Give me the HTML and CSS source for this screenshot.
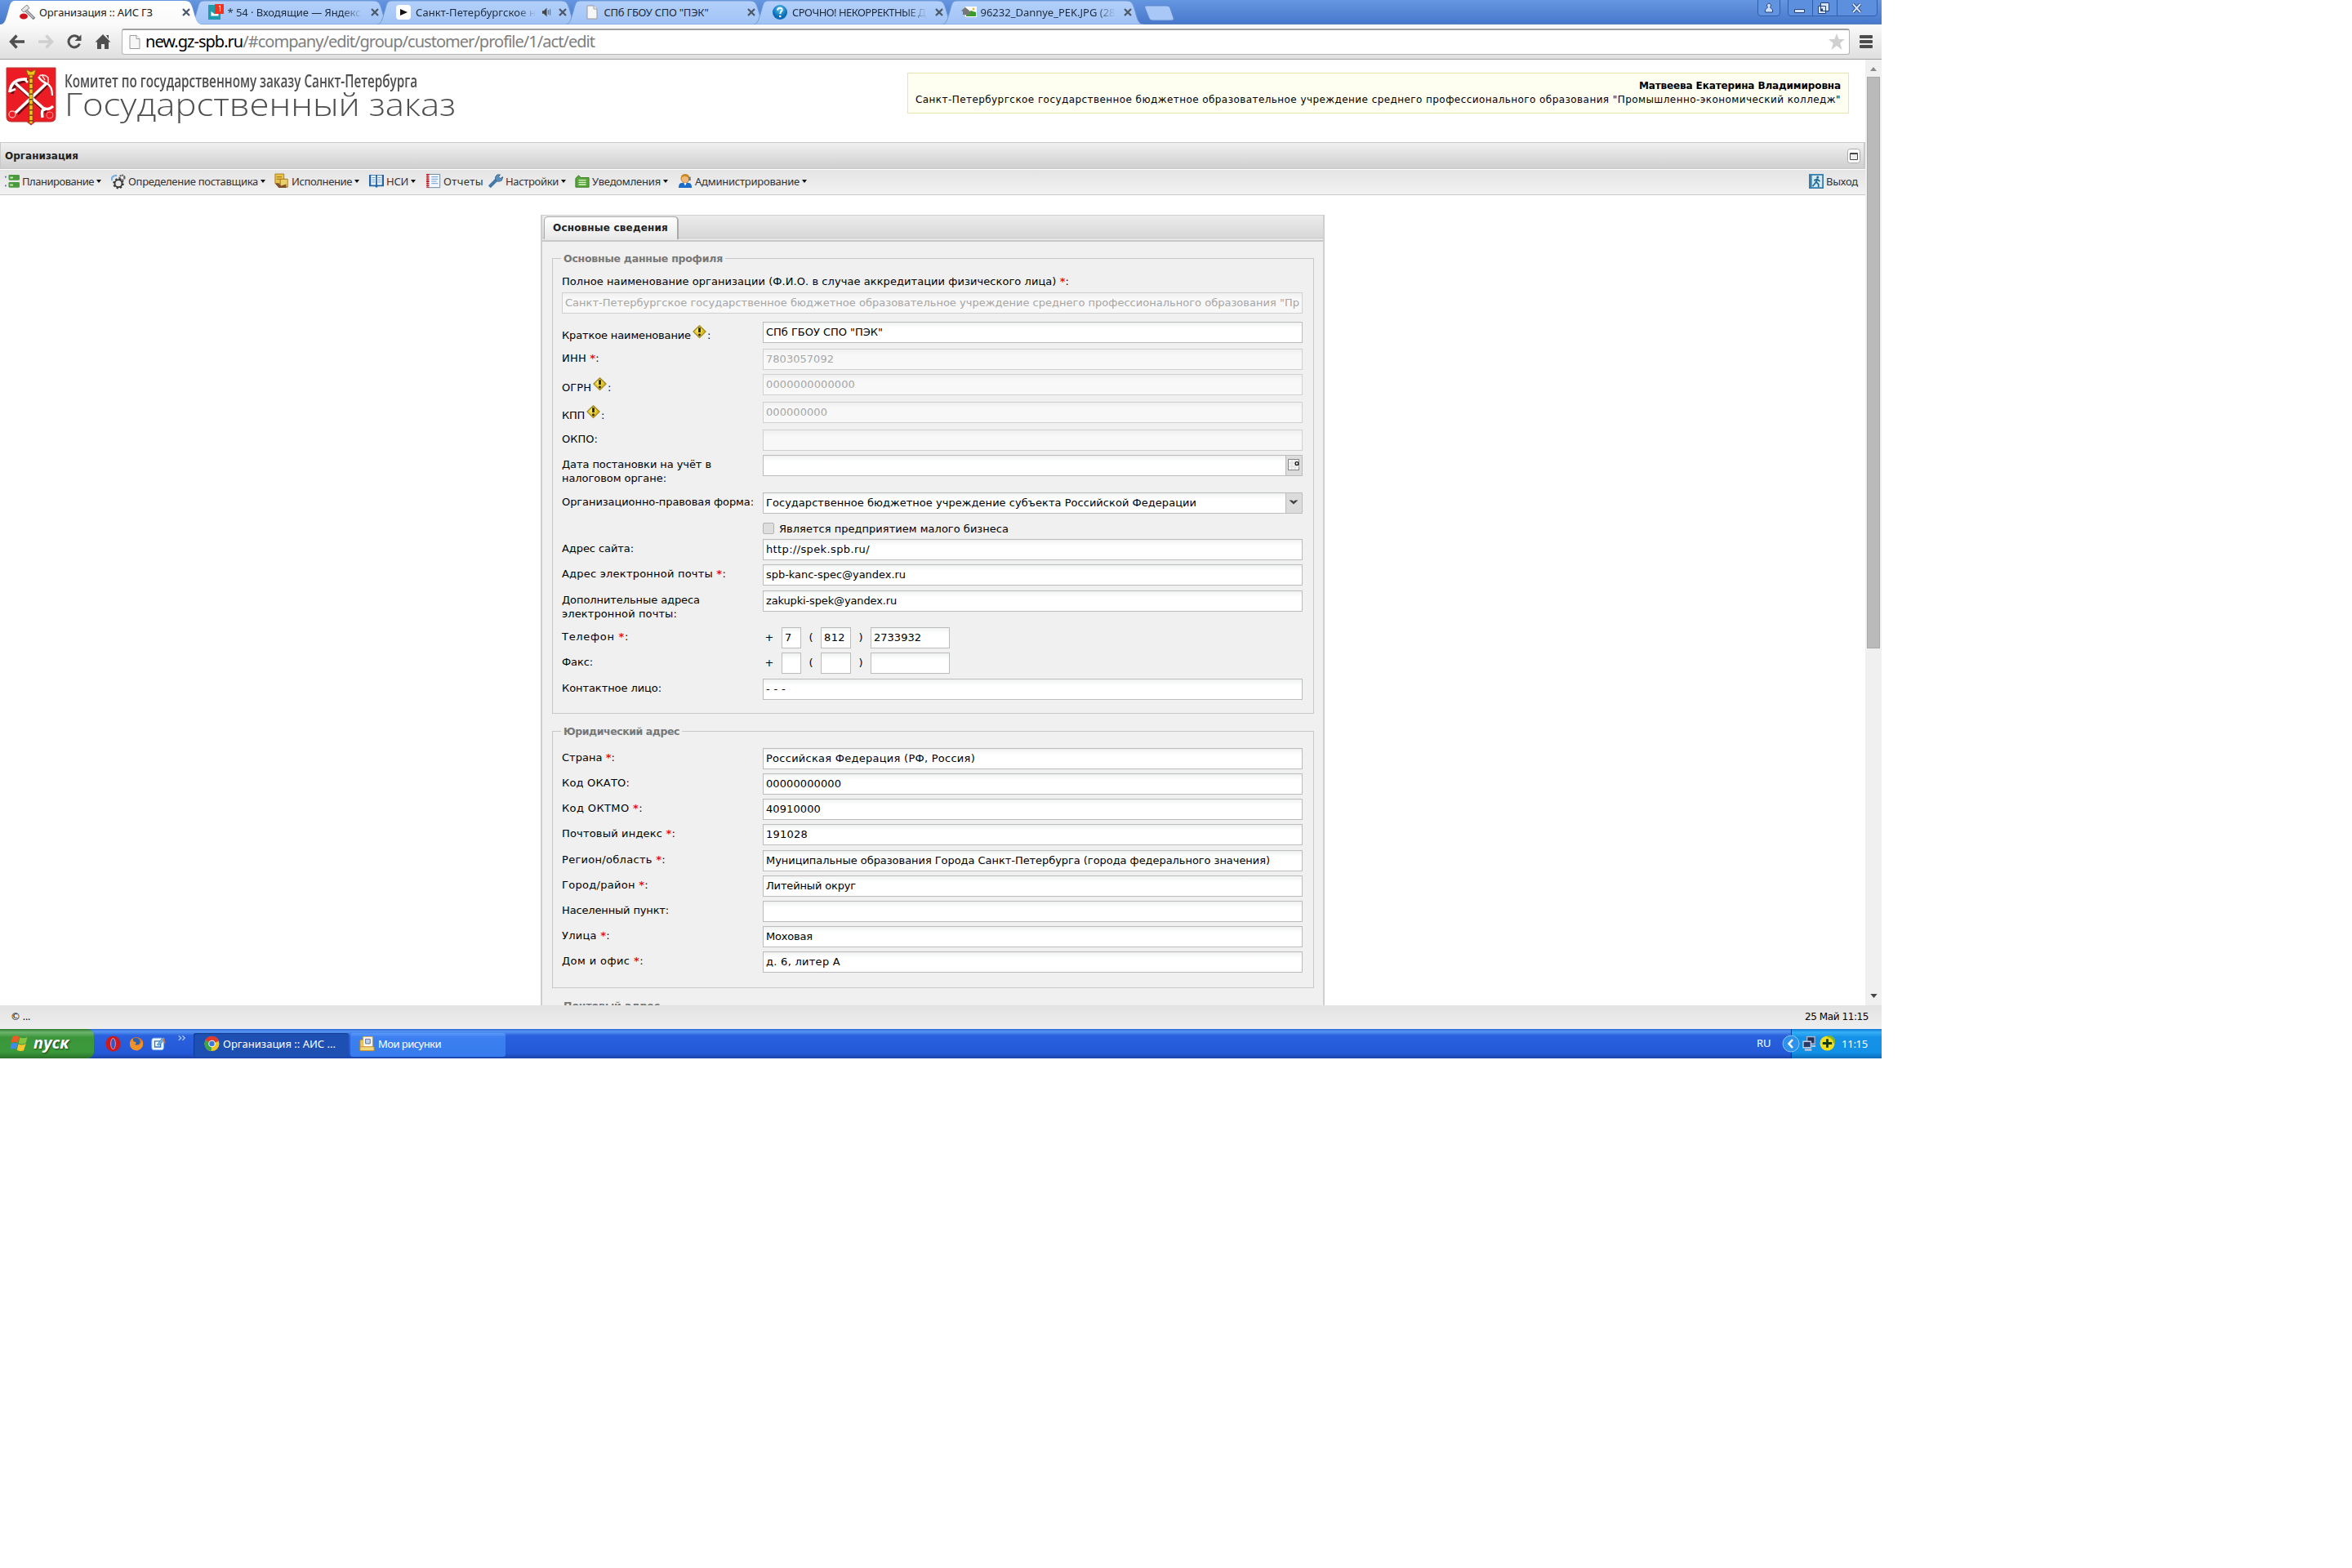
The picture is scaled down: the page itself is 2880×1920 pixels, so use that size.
FILE: index.html
```html
<!DOCTYPE html>
<html lang="ru">
<head>
<meta charset="utf-8">
<title>Организация :: АИС ГЗ</title>
<link rel="stylesheet" href="styles.css">
</head>
<body>
<svg width="0" height="0" class="defs">
  <defs>
    <linearGradient id="gt" x1="0" y1="0" x2="0" y2="1"><stop offset="0" stop-color="#b4d0fb"/><stop offset="1" stop-color="#a0c3f5"/></linearGradient>
    <linearGradient id="ga" x1="0" y1="0" x2="0" y2="1"><stop offset="0" stop-color="#fff"/><stop offset="1" stop-color="#fafafa"/></linearGradient>
    <radialGradient id="gy" cx=".4" cy=".35"><stop offset="0" stop-color="#fff27a"/><stop offset="1" stop-color="#d9b416"/></radialGradient>
    <radialGradient id="gb" cx=".5" cy=".3"><stop offset="0" stop-color="#5cc8f4"/><stop offset="1" stop-color="#0a6cb4"/></radialGradient>
    <symbol id="tab" viewBox="0 0 246 30" preserveAspectRatio="none"><path d="M0 30C5 29 6 24 9 14C12 3 12 1 19 1H225C232 1 233 4 236 14C239 25 240 29 246 30Z"/></symbol>
    <symbol id="x" viewBox="0 0 10 10"><path d="M1 1L9 9M9 1L1 9" stroke="#4c5868" stroke-width="2.3"/></symbol>
    <symbol id="warn" viewBox="0 0 18 18"><path d="M9 .8L17 8.5L9 16.500L1 8.500Z" fill="url(#gy)" stroke="#9c8420" stroke-width="1.200" stroke-linejoin="round"/><path d="M9 3.500V9.500" stroke="#222" stroke-width="3"/><circle cx="9" cy="12.700" r="1.500" fill="#222"/></symbol>
    <symbol id="page" viewBox="0 0 14 18"><path d="M1 1H9L13 5V17H1Z" fill="#f6f6f6" stroke="#999"/><path d="M9 1V5H13" fill="#fff" stroke="#999"/></symbol>
  </defs>
</svg>
<div class="screen">
  <div class="tabs">
    <div class="tab on"><svg class="shape" fill="url(#ga)"><use href="#tab"/></svg>
      <svg class="ti" viewBox="0 0 20 20"><path d="M7 7L18 18" stroke="#777" stroke-width="3.500"/><path d="M8 8L17 17" stroke="#ccc" stroke-width="1.500"/><path d="M2 7L9 1L12 5L5 10Z" fill="#e4e4e4" stroke="#888"/><ellipse cx="5" cy="15" rx="5" ry="3.500" fill="#d0161c"/></svg>
      <span class="tt"><span data-w="139">Организация :: АИС ГЗ</span></span><svg class="cx"><use href="#x"/></svg></div>
    <div class="tab"><svg class="shape" fill="url(#gt)" stroke="#6f9ad6"><use href="#tab"/></svg>
      <svg class="ti" viewBox="0 0 20 20"><path d="M0 1H15V19H0Z" fill="#1d9dac"/><path d="M3 8H13V15H3ZM3 8L8 12L13 8" fill="#fff" stroke="#1d9dac"/><rect x="8" width="11" height="12" fill="#f4321e"/><path d="M13 3L14.500 2V9" stroke="#fff" fill="none"/></svg>
      <span class="tt fade"><span data-w="163">* 54 · Входящие — Яндекс</span></span><svg class="cx"><use href="#x"/></svg></div>
    <div class="tab"><svg class="shape" fill="url(#gt)" stroke="#6f9ad6"><use href="#tab"/></svg>
      <svg class="ti" viewBox="0 0 20 20"><rect x="0" y="1" width="18" height="18" rx="4" fill="#fff"/><path d="M5 6L14 10L5 14Z" fill="#111"/></svg>
      <span class="tt t3 fade"><span data-w="147">Санкт-Петербургское н</span></span><svg class="spk" viewBox="0 0 12 12"><path d="M0 4H2L6 0V12L2 8H0Z" fill="#444"/><path d="M8 3V9M10.500 2V10" stroke="#555"/></svg><svg class="cx"><use href="#x"/></svg></div>
    <div class="tab"><svg class="shape" fill="url(#gt)" stroke="#6f9ad6"><use href="#tab"/></svg>
      <svg class="ti narrow"><use href="#page"/></svg>
      <span class="tt"><span data-w="128">СПб ГБОУ СПО "ПЭК"</span></span><svg class="cx"><use href="#x"/></svg></div>
    <div class="tab"><svg class="shape" fill="url(#gt)" stroke="#6f9ad6"><use href="#tab"/></svg>
      <svg class="ti" viewBox="0 0 20 20"><ellipse cx="9" cy="10" rx="9" ry="9" fill="url(#gb)"/><path d="M6 7.500Q6.500 4.500 9.500 4.800Q12.500 5.500 11.500 8Q9.300 9.500 9.300 12" stroke="#fff" stroke-width="2" fill="none"/><circle cx="9.300" cy="15" r="1.300" fill="#fff"/></svg>
      <span class="tt fade"><span data-w="163">СРОЧНО! НЕКОРРЕКТНЫЕ Д</span></span><svg class="cx"><use href="#x"/></svg></div>
    <div class="tab"><svg class="shape" fill="url(#gt)" stroke="#6f9ad6"><use href="#tab"/></svg>
      <svg class="ti" viewBox="0 0 20 20"><rect x="5" y="3" width="14" height="13" fill="#fff"/><path d="M6 11L12 8L18 10V15H6Z" fill="#3d9b2c"/><path d="M0 8L5 4L10 8V13H2V9Z" fill="#777"/><circle cx="15" cy="6" r="1.500" fill="#e7b840"/></svg>
      <span class="tt fade"><span data-w="165">96232_Dannye_PEK.JPG (28</span></span><svg class="cx"><use href="#x"/></svg></div>
    <svg class="newtab" viewBox="0 0 40 20"><path d="M3 1H29Q32 1 33 4L37 16Q38 19 35 19H11Q8 19 7 16L2 4Q1 1 3 1Z" fill="#a9c8f7" stroke="#5c88cf"/></svg>
    <div class="win">
      <svg class="w1" viewBox="0 0 28 20"><path d="M.5 0V16Q.5 19.500 4 19.500H24Q27.500 19.500 27.500 16V0" fill="#6094e0" stroke="#2f5eaf"/><path d="M11.500 6Q14 2 16.500 6Q16.500 8 15.500 9L18.500 12V15H9.500V12L12.500 9Q11.500 8 11.500 6Z" fill="#cfe0fa" stroke="#26427c"/></svg>
      <svg class="w2" viewBox="0 0 110 20"><path d="M.5 0V16Q.5 19.500 4 19.500H106Q109.500 19.500 109.500 16V0M30.500 0V19.500M60.500 0V19.500" fill="#5c90df" stroke="#2f5eaf"/><path d="M8.500 11.500H20.500V15.500H8.500Z" fill="#d7e5fb" stroke="#26427c"/><path d="M40.500 3.500H50.500V13.500H40.500ZM37.500 7.500H46.500V16.500H37.500Z" fill="#d7e5fb" stroke="#26427c"/><path d="M41 10.500H43V13.500H41Z" fill="#26427c"/><path d="M80 5L89 15M89 5L80 15" stroke="#26427c" stroke-width="4"/><path d="M80 5L89 15M89 5L80 15" stroke="#d7e5fb" stroke-width="2"/></svg>
    </div>
  </div>

  <div class="nav">
    <svg class="n1" viewBox="0 0 20 18"><path d="M9.500 1.500L2.500 9L9.500 16.500M3 9H19" stroke="#4f4f4f" stroke-width="3.400" fill="none"/></svg>
    <svg class="n2" viewBox="0 0 20 18"><path d="M10.500 1.500L17.500 9L10.500 16.500M17 9H1" stroke="#cfcfcf" stroke-width="3.400" fill="none"/></svg>
    <svg class="n3" viewBox="0 0 20 18"><path d="M15.500 4.500A7 7 0 1 0 16.500 11.500" stroke="#4f4f4f" stroke-width="3" fill="none"/><path d="M18.500 .5V8H10.500Z" fill="#4f4f4f"/></svg>
    <svg class="n4" viewBox="0 0 20 18"><path d="M10 0L19.500 9.500H17V18H12V12H8V18H3V9.500H.5ZM14 1H17V6Z" fill="#4f4f4f"/></svg>
    <div class="omni"><svg class="pg"><use href="#page"/></svg><span class="url" data-w="550">new.gz-spb.ru<i>/#company/edit/group/customer/profile/1/act/edit</i></span>
      <svg class="star" viewBox="0 0 20 20"><path d="M10 0L12.700 7H20L14.300 11.800L16.500 20L10 15L3.500 20L5.700 11.800L0 7H7.300Z" fill="#d0d0d0"/></svg></div>
    <div class="menu"><b></b><b></b><b></b></div>
  </div>

  <div class="view">
    <div class="page">
      <div class="head">
        <svg class="arms" viewBox="0 0 62 72"><path d="M1 1H61V61Q61 67 55 67H36L31 71L26 67H7Q1 67 1 61Z" fill="#ec1c24" stroke="#b23a3a"/><g fill="none" stroke="#6b1015"><path d="M15 23L50 55M52 20L14 57" stroke-width="5"/><path d="M8 33Q9 17 27 17" stroke-width="4"/></g><g fill="none" stroke="#fff"><path d="M12 20L49 53" stroke-width="3.600"/><path d="M5 31Q6 14 26 15" stroke-width="3.600"/><path d="M5 30L12 27M22 14L27 19" stroke-width="2.500"/><path d="M50 20L12 56" stroke-width="3.600"/><path d="M40 12Q44 18 50 20Q57 23 57 35" stroke-width="2.300"/><path d="M45 62Q43 52 48 51Q52 53 58 48" stroke-width="3.400"/></g><circle cx="8" cy="58" r="4" fill="none" stroke="#f7b6b6" stroke-width="1.300"/><circle cx="54" cy="59" r="4" fill="none" stroke="#f79090"/><path d="M41 11Q47 8 52 13L52 20M45 11L48 16" stroke="#f7d6d6" stroke-width="1.500" fill="none"/><path d="M31 8V69" stroke="#6b4d10" stroke-width="5"/><path d="M31 8V69" stroke="#f3c51d" stroke-width="3.400" stroke-dasharray="5 1.500"/><path d="M25 3L31 6L37 3L35 10H27Z" fill="#f3c51d" stroke="#8a5f10"/></svg>
        <div class="brand"><div class="b1"><span data-w="432" data-mode="scale">Комитет по государственному заказу Санкт-Петербурга</span></div><div class="b2"><span data-w="479" data-mode="scale">Государственный заказ</span></div></div>
        <div class="user"><div><b data-w="247">Матвеева Екатерина Владимировна</b></div><div><span data-w="1133">Санкт-Петербургское государственное бюджетное образовательное учреждение среднего профессионального образования "Промышленно-экономический колледж"</span></div></div>
      </div>
      <div class="title"><b data-w="90">Организация</b><svg viewBox="0 0 16 18"><rect x=".5" y=".5" width="15" height="17" rx="3" fill="#fff" stroke="#aaa"/><path d="M3.500 5.500H12.500V13.500H3.500ZM3.500 6.500H12.500" fill="#eee" stroke="#444"/></svg></div>
      <div class="bar">
        <div class="mi m1"><svg viewBox="0 0 20 20"><path d="M0 4H2M0 16H2" stroke="#66a" stroke-width="2"/><rect x="5" y="1" width="15" height="7.500" rx="1.500" fill="#4b9b3e"/><rect x="5" y="11" width="15" height="7.500" rx="1.500" fill="#4b9b3e"/><path d="M7 5H11M7 15H11" stroke="#c8ecb8" stroke-width="2"/></svg><span data-w="88">Планирование</span><em></em></div>
        <div class="mi m2"><svg viewBox="0 0 20 20"><path d="M1 9Q0 2 8 2" stroke="#7ab0dc" stroke-width="2.500" fill="none"/><circle cx="15" cy="5" r="3.300" fill="#eee" stroke="#555" stroke-width="2.500" stroke-dasharray="2 1"/><circle cx="10" cy="13" r="5" fill="#e8e8e8" stroke="#333" stroke-width="2"/><circle cx="10" cy="13" r="6.500" fill="none" stroke="#333" stroke-width="2" stroke-dasharray="2.500 2.600"/></svg><span data-w="159">Определение поставщика</span><em></em></div>
        <div class="mi m3"><svg viewBox="0 0 20 20"><path d="M1 0H13V13H1Z" fill="#e8c24a" stroke="#a87b1a"/><path d="M3 4H10M3 7H10" stroke="#9b7017"/><path d="M8 7H18V18H8Z" fill="#edd06a" stroke="#96701a"/><path d="M1 13Q6 11 9 16L16 14V19H6Z" fill="#80522b"/></svg><span data-w="74">Исполнение</span><em></em></div>
        <div class="mi m4"><svg viewBox="0 0 20 20"><path d="M0 1H20V17H12L10 19L8 17H0Z" fill="#2363a4"/><path d="M2.500 2H9V15H2.500ZM11 2H17.500V15H11Z" fill="#eaf3fc"/><path d="M4 5H8M4 8H8M4 11H8M12 5H16M12 8H16M12 11H16" stroke="#5b94c9"/></svg><span data-w="27">НСИ</span><em></em></div>
        <div class="mi m5"><svg viewBox="0 0 20 20"><path d="M2 .5H18.500V18.500H2Z" fill="#f4f8fd" stroke="#62809d"/><path d="M2 0V19" stroke="#c02228" stroke-width="4" stroke-dasharray="2 1"/><path d="M7 4H16M7 7H16M7 10H14M7 13H16" stroke="#5d91c9"/></svg><span data-w="49">Отчеты</span></div>
        <div class="mi m6"><svg viewBox="0 0 20 20"><path d="M1.500 17.500L12 7" stroke="#4378a8" stroke-width="4.500"/><path d="M12 1Q8 4 10 8T18 9L20 4L16 6L14 4L16 1Z" fill="#5b90bd" stroke="#33638f"/></svg><span data-w="65">Настройки</span><em></em></div>
        <div class="mi m7"><svg viewBox="0 0 20 20"><path d="M1 6L5 2L8 5H19V18H1Z" fill="#58a53b" stroke="#36781f"/><path d="M5 8.500H15M5 11.500H15M5 14.500H15" stroke="#dff3cf" stroke-width="1.600"/></svg><span data-w="84">Уведомления</span><em></em></div>
        <div class="mi m8"><svg viewBox="0 0 20 20"><path d="M1 19Q1 12 6 12H14Q19 12 19 19Z" fill="#1d6cc9"/><circle cx="10" cy="6.500" r="5.500" fill="#f0b878" stroke="#b57a22"/><path d="M4 7Q4 0 10 0T16 7Q13 3 9 3Q5 4 4 7Z" fill="#c78a20"/><path d="M16 4V9" stroke="#777" stroke-width="3"/><path d="M8 12L10 16L12 12Z" fill="#fff"/></svg><span data-w="128">Администрирование</span><em></em></div>
        <div class="mi exit"><svg viewBox="0 0 20 20"><rect width="20" height="20" fill="#3a7da8"/><rect x="4" y="2" width="14" height="16" fill="#d5ebf6"/><circle cx="12" cy="4.500" r="1.700" fill="#236a96"/><path d="M12 7L9 12L5 17M10 11L13 14V18M7 9L11 7L15 10" stroke="#236a96" stroke-width="2" fill="none"/></svg><span data-w="39">Выход</span></div>
      </div>

      <div class="panel">
        <div class="strip"><div class="ptab"><b data-w="141">Основные сведения</b></div></div>
        <div class="fs f1"><div class="lg"><b data-w="195">Основные данные профиля</b></div>
          <div class="full"><span data-w="621">Полное наименование организации (Ф.И.О. в случае аккредитации физического лица) <u>*</u>:</span></div>
          <div class="in off wide"><span data-w="899">Санкт-Петербургское государственное бюджетное образовательное учреждение среднего профессионального образования "Пр</span></div>
          <div class="row p33"><div class="lb low"><span data-w="158">Краткое наименование</span><svg class="wn"><use href="#warn"/></svg>:</div><div class="in"><span data-w="143">СПб ГБОУ СПО "ПЭК"</span></div></div>
          <div class="row p31"><div class="lb"><span data-w="46">ИНН <u>*</u>:</span></div><div class="in off"><span data-w="83">7803057092</span></div></div>
          <div class="row p34"><div class="lb low"><span data-w="36">ОГРН</span><svg class="wn"><use href="#warn"/></svg>:</div><div class="in off"><span data-w="109">0000000000000</span></div></div>
          <div class="row p34"><div class="lb low"><span data-w="28">КПП</span><svg class="wn"><use href="#warn"/></svg>:</div><div class="in off"><span data-w="75">000000000</span></div></div>
          <div class="row p31"><div class="lb"><span data-w="44">ОКПО:</span></div><div class="in off"></div></div>
          <div class="row p46"><div class="lb"><span data-w="183">Дата постановки на учёт в</span><br><span data-w="128">налоговом органе:</span></div><div class="in trig"><svg viewBox="0 0 20 24"><path d="M0 0H20V24H0Z" fill="#dcdcdc"/><path d="M.5 0V24" stroke="#bbb"/><rect x="3.500" y="4.500" width="13" height="13" fill="#f4f4f4" stroke="#888"/><path d="M4 9H17M4 13H17M8 5V17M12 5V17" stroke="#ddd"/><circle cx="14" cy="9.500" r="1.900" fill="#fff" stroke="#111" stroke-width="1.300"/></svg></div></div>
          <div class="row p34"><div class="lb"><span data-w="235">Организационно-правовая форма:</span></div><div class="in trig"><span data-w="527">Государственное бюджетное учреждение субъекта Российской Федерации</span><svg viewBox="0 0 20 24"><path d="M0 0H20V24H0Z" fill="#dcdcdc"/><path d="M.5 0V24" stroke="#bbb"/><path d="M4.500 8.500H8L10 10L12 8.500H15.500L10 13.500Z" fill="#444"/></svg></div></div>
          <div class="row p23"><div class="lb"></div><div class="chk"><i></i><span data-w="281">Является предприятием малого бизнеса</span></div></div>
          <div class="row p31"><div class="lb"><span data-w="88">Адрес сайта:</span></div><div class="in"><span data-w="127">http://spek.spb.ru/</span></div></div>
          <div class="row p32"><div class="lb"><span data-w="201">Адрес электронной почты <u>*</u>:</span></div><div class="in"><span data-w="171">spb-kanc-spec@yandex.ru</span></div></div>
          <div class="row p45"><div class="lb"><span data-w="169">Дополнительные адреса</span><br><span data-w="141">электронной почты:</span></div><div class="in"><span data-w="160">zakupki-spek@yandex.ru</span></div></div>
          <div class="row p31"><div class="lb"><span data-w="82">Телефон <u>*</u>:</span></div><div class="tel"><s>+</s><div class="in">7</div><s>(</s><div class="in"><span data-w="26">812</span></div><s>)</s><div class="in"><span data-w="58">2733932</span></div></div></div>
          <div class="row p32"><div class="lb"><span data-w="38">Факс:</span></div><div class="tel"><s>+</s><div class="in"></div><s>(</s><div class="in"></div><s>)</s><div class="in"></div></div></div>
          <div class="row p31"><div class="lb"><span data-w="122">Контактное лицо:</span></div><div class="in"><span data-w="24">- - -</span></div></div>
        </div>
        <div class="fs f2"><div class="lg"><b data-w="142">Юридический адрес</b></div>
          <div class="row p31"><div class="lb"><span data-w="65">Страна <u>*</u>:</span></div><div class="in"><span data-w="256">Российская Федерация (РФ, Россия)</span></div></div>
          <div class="row p31"><div class="lb"><span data-w="83">Код ОКАТО:</span></div><div class="in"><span data-w="92">00000000000</span></div></div>
          <div class="row p31"><div class="lb"><span data-w="99">Код ОКТМО <u>*</u>:</span></div><div class="in"><span data-w="67">40910000</span></div></div>
          <div class="row p32"><div class="lb"><span data-w="139">Почтовый индекс <u>*</u>:</span></div><div class="in"><span data-w="51">191028</span></div></div>
          <div class="row p31"><div class="lb"><span data-w="127">Регион/область <u>*</u>:</span></div><div class="in"><span data-w="617">Муниципальные образования Города Санкт-Петербурга (города федерального значения)</span></div></div>
          <div class="row p31"><div class="lb"><span data-w="106">Город/район <u>*</u>:</span></div><div class="in"><span data-w="110">Литейный округ</span></div></div>
          <div class="row p31"><div class="lb"><span data-w="131">Населенный пункт:</span></div><div class="in"></div></div>
          <div class="row p31"><div class="lb"><span data-w="59">Улица <u>*</u>:</span></div><div class="in"><span data-w="57">Моховая</span></div></div>
          <div class="row p31"><div class="lb"><span data-w="100">Дом и офис <u>*</u>:</span></div><div class="in"><span data-w="91">д. 6, литер А</span></div></div>
        </div>
        <div class="fs f3"><div class="lg"><b data-w="118">Почтовый адрес</b></div></div>
      </div>
    </div>
    <div class="scroll"><svg class="up" viewBox="0 0 10 6"><path d="M0 6L5 0L10 6Z" fill="#8a8a8a"/></svg><div class="thumb"></div><svg class="dn" viewBox="0 0 10 6"><path d="M0 0L5 6L10 0Z" fill="#444"/></svg></div>
  </div>
  <div class="status"><span data-w="24">© ...</span><span data-w="78">25 Май 11:15</span></div>

  <div class="task">
    <div class="start"><svg viewBox="0 0 24 24"><path d="M3 4Q7 1 12 4L10 12Q6 9 1 12Z" fill="#ee5a24"/><path d="M13 4.500Q18 7 23 4L21 12Q16 15 11 12.500Z" fill="#86c440"/><path d="M1 13Q5 10.500 10 13L8 21Q4 18 0 21Z" fill="#3f8be8"/><path d="M11 13.500Q16 16 21 13L18 22Q14 24 9 21.500Z" fill="#fbc52c"/></svg><b data-w="44">пуск</b></div>
    <svg class="q1" viewBox="0 0 20 20"><ellipse cx="10" cy="10" rx="9.500" ry="10" fill="#c81a1f"/><ellipse cx="10" cy="10" rx="3" ry="7" fill="#2b56cf" stroke="#ff9c90"/></svg>
    <svg class="q2" viewBox="0 0 20 20"><circle cx="10" cy="10" r="9" fill="#e8761a"/><circle cx="9.500" cy="7.500" r="5.500" fill="#2b62ad"/><path d="M1 9Q3 3 5 3L6 7Q9 7 10 9L8 11Q11 13 16 10L18 5Q22 16 11 19.500Q1 19 1 9Z" fill="#f2902a"/></svg>
    <svg class="q3" viewBox="0 0 20 20"><rect x="1" y="3" width="16" height="16" rx="3" fill="#f4faff" stroke="#8fc0ea"/><path d="M5 7H13V15H5Z" fill="#fff" stroke="#2e74b8" stroke-width="1.500"/><path d="M8 12L16 2L19 4L11 13Z" fill="#6fb4e8" stroke="#3d77a8" stroke-width=".8"/><path d="M17 4L19 10" stroke="#e36a25" stroke-width="2"/></svg>
    <svg class="q4" viewBox="0 0 12 8"><path d="M1 0L5 4L1 8M7 0L11 4L7 8" fill="none" stroke="#b9d0ff" stroke-width="1.500"/></svg>
    <div class="tb dark"><svg viewBox="0 0 20 20"><circle cx="10" cy="10" r="9.500" fill="#f4c51d"/><path d="M10 10L1.500 5.500A9.500 9.500 0 0 1 19 6.500Z" fill="#dd3b2c"/><path d="M10 10L1.500 5.500A9.500 9.500 0 0 0 9 19.500Z" fill="#3da448"/><circle cx="10" cy="10" r="4.500" fill="#fff"/><circle cx="10" cy="10" r="3.400" fill="#3b78d8"/></svg><span data-w="138">Организация :: АИС ...</span></div>
    <div class="tb"><svg viewBox="0 0 20 20"><path d="M1 5H6V16H19V19H1Z" fill="#f0c75a" stroke="#b9892b"/><path d="M5 1H17V14H5Z" fill="#fff" stroke="#e0b040"/><path d="M8 4H14V10H8Z" fill="#b8d6f4" stroke="#668"/><path d="M1 14H19V19H1Z" fill="#f5d57a" stroke="#b9892b" stroke-width=".8"/></svg><span data-w="77">Мои рисунки</span></div>
    <div class="ru">RU</div>
    <div class="tray"><svg class="chev" viewBox="0 0 22 22"><circle cx="11" cy="11" r="10" fill="#2f92ea" stroke="#8cc6f8"/><path d="M13 6L8.500 11L13 16" fill="none" stroke="#fff" stroke-width="2.500"/></svg>
      <svg class="mon" viewBox="0 0 18 20"><path d="M6 1H16V10H6Z" fill="#23304f" stroke="#a9b4cf" stroke-width="1.500"/><path d="M1 7H11V15H1Z" fill="#2a3a66" stroke="#c2cbe2" stroke-width="1.500"/><path d="M3 18H12M12 13H17" stroke="#bfc5d8" stroke-width="2.500"/></svg>
      <svg class="plus" viewBox="0 0 20 20"><circle cx="10" cy="10" r="9.500" fill="#f2dd1c"/><path d="M10 .5A9.500 9.500 0 0 1 19.500 10" stroke="#7fb528" stroke-width="3" fill="none"/><path d="M10 4.500V15.500M4 10H16" stroke="#163a12" stroke-width="3"/></svg><span data-w="32">11:15</span></div>
  </div>
</div>
<script src="fit.js"></script>
</body>
</html>
```
FILE: styles.css
```css
* { box-sizing: border-box; }
body { margin: 0; background: #fff; font-family: "DejaVu Sans", Verdana, sans-serif; font-size: 13px; color: #000; }
svg { display: block; flex: none; }
.defs { position: absolute; }
[data-w] { display: inline-block; white-space: pre; }
.screen { width: 2304px; height: 1296px; display: flex; flex-direction: column; overflow: hidden; }

/* browser tab strip */
.tabs { height: 30px; flex: none; display: flex; background: linear-gradient(#6596e0, #4878cc); padding-left: 8px; font-family: "Noto Sans", Tahoma, sans-serif; font-size: 13px; color: #1e2a3c; border-bottom: 1px solid #5a80b8; }
.tab { position: relative; width: 230.500px; height: 30px; flex: none; display: flex; align-items: center; padding: 2px 3px 2px 16px; z-index: 0; }
.tab.on { z-index: 1; color: #222; }
.shape { position: absolute; left: -7px; top: 0; width: 246px; height: 30px; z-index: -1; }
.ti { width: 20px; height: 20px; }
.ti.narrow { width: 14px; height: 18px; margin: 0 4px 0 2px; }
.tt { width: 165px; margin-left: 4px; overflow: hidden; white-space: nowrap; line-height: 24px; flex: none; }
.tt.t3 { width: 147px; }
.fade { mask-image: linear-gradient(90deg, #000 85%, transparent); }
.spk { width: 11px; height: 12px; margin-left: 8px; }
.cx { width: 10px; height: 10px; margin-left: 10px; }
.spk + .cx { margin-left: 9px; }
.newtab { width: 40px; height: 20px; margin: 6px 0 0 9px; }
.win { margin-left: auto; display: flex; gap: 9px; padding-right: 5px; }
.w1 { width: 28px; height: 20px; }
.w2 { width: 110px; height: 20px; }

/* address bar */
.nav { height: 43px; flex: none; display: flex; align-items: center; background: linear-gradient(#fafafa, #dfdfdf); border-bottom: 1px solid #a0a0a0; padding: 0 11px 0 11px; }
.nav > svg { width: 20px; height: 18px; }
.n2 { margin-left: 15px; } .n3 { margin-left: 15px; } .n4 { margin-left: 15px; }
.omni { flex: 1; margin: 0 12px 0 13px; height: 32px; border: 1px solid #b4b4b4; border-top: 2px solid #a0a0a0; border-radius: 3px; background: #fff; display: flex; align-items: center; padding: 0 5px 1px 8px; }
.pg { width: 14px; height: 19px; }
.url { font: 20px/28px "Noto Sans", Tahoma, sans-serif; margin-left: 6px; }
.url i { font-style: normal; color: #7e7e7e; }
.star { width: 20px; height: 20px; margin-left: auto; }
.menu { display: flex; flex-direction: column; gap: 2px; }
.menu b { width: 16px; height: 4px; border-radius: 1px; background: #4c4c4c; }

.view { height: 1158px; flex: none; display: flex; overflow: hidden; }
.page { flex: 1; height: 1158px; overflow: hidden; }
.scroll { width: 20px; flex: none; background: #f0f0f0; display: flex; flex-direction: column; align-items: center; }
.up { width: 8px; height: 5px; margin-top: 9px; }
.dn { width: 9px; height: 5px; margin: auto 0 9px; }
.thumb { width: 16px; height: 700px; margin-top: 7px; background: #bababa; border: 1px solid #a8a8a8; }

/* site header */
.head { height: 101px; display: flex; align-items: flex-start; padding: 0 20px 0 7px; }
.arms { width: 62px; height: 72px; margin-top: 9px; }
.brand { margin-left: 10px; color: #4e4e50; }
.b1 { height: 22px; margin-top: 15px; font: 600 21px/22px "Open Sans", "Noto Sans", sans-serif; }
.b2 { height: 46px; font: 300 39px/38px "Open Sans", Lato, sans-serif; margin-top: -2px; }
.user { margin: 16px 0 0 auto; width: 1153px; height: 50px; border: 1px solid #e9e4ae; background: #fefef1; padding: 7px 9px; text-align: right; font-size: 12px; line-height: 17px; }

.title { height: 33px; border: 1px solid #cacaca; border-right-width: 2px; background: linear-gradient(#f0f0f0, #cfcfcf); display: flex; align-items: center; justify-content: space-between; padding: 0 4px 0 5px; font-size: 12px; color: #222; }
.title svg { width: 16px; height: 18px; }
.bar { height: 31px; margin-top: 1px; background: linear-gradient(#e4e4e4, #f2f2f2); border-bottom: 1px solid #c8c8c8; display: flex; align-items: center; padding: 0 9px 2px 6px; font: 13px "Noto Sans", Tahoma, sans-serif; color: #333; }
.mi { display: flex; align-items: center; gap: 3px; flex: none; }
.mi svg { width: 18px; height: 20px; }
.mi em { border: 3px solid transparent; border-top: 4px solid #111; border-bottom: 0; }
.m1 { width: 130px; } .m2 { width: 200px; } .m3 { width: 116px; } .m4 { width: 70px; } .m5 { width: 76px; } .m6 { width: 106px; } .m7 { width: 126px; }
.exit { margin-left: auto; }

/* form panel */
.panel { width: 960px; margin: 24px 0 0 662px; height: 1000px; border: 1px solid #cfcfcf; border-width: 1px 2px 0; background: #f0f0f0; }
.strip { height: 32px; background: linear-gradient(#ebebeb, #d8d8d8 27px, #c8c8c8 27px, #c8c8c8 28px, #e8e8e8 28px, #e8e8e8 30px, #c8c8c8 30px); padding: 1px 0 0 2px; }
.ptab { width: 165px; height: 28px; border: 1px solid #aaa; border-width: 1px 2px 0 1px; border-radius: 5px 5px 0 0; background: linear-gradient(#fff, #e8e8e8); padding-left: 10px; line-height: 26px; font-size: 12px; color: #222; }
.fs { position: relative; width: 933px; margin-left: 12px; border: 1px solid #c8c8c8; }
.f1 { margin-top: 20px; height: 558px; padding: 19px 12px 0 11px; }
.f2 { margin-top: 21px; height: 315px; padding: 20px 12px 0 11px; }
.f3 { margin-top: 21px; height: 100px; }
.lg { position: absolute; left: 10px; top: -9px; padding: 0 3px; background: #f0f0f0; line-height: 18px; color: #777; font-size: 12.500px; }
.full { line-height: 18px; height: 22px; }
.in { width: 661px; height: 26px; flex: none; border: 1px solid #bcbcbc; background: linear-gradient(#f0f2f2, #fff 7px); padding-left: 3px; line-height: 24px; white-space: nowrap; overflow: hidden; }
.off { border-color: #d0d0d0; background: linear-gradient(#f0f0f0, #f8f8f8 7px); color: #a6a6a6; }
.wide { width: 907px; margin-bottom: 10px; }
.row { display: flex; }
.lb { width: 246px; flex: none; line-height: 16.500px; padding-top: 4px; white-space: nowrap; }
.low { padding-top: 4px; display: flex; align-items: flex-end; height: 25px; }
.wn { width: 17px; height: 17px; margin: 0 1px 0 2px; align-self: flex-start; }
.lb u, .full u { text-decoration: none; font-weight: bold; color: #e8101c; }
.p23 { height: 23px; } .p31 { height: 31px; } .p32 { height: 32px; } .p33 { height: 33px; } .p34 { height: 34px; } .p45 { height: 45px; } .p46 { height: 46px; }
.trig { display: flex; justify-content: space-between; }
.trig svg { width: 20px; height: 24px; margin-left: auto; }
.chk { display: flex; align-items: center; gap: 6px; height: 20px; }
.chk i { width: 14px; height: 14px; border: 1px solid #b4b4b4; border-radius: 2px; background: #dedede; }
.tel { display: flex; line-height: 26px; }
.tel s { text-decoration: none; width: 24px; text-align: center; }
.tel s:first-child { width: 23px; padding-right: 7px; }
.tel .in { width: 24px; }
.tel .in:nth-child(4) { width: 37px; }
.tel .in:nth-child(6) { width: 97px; }

.status { height: 29px; flex: none; background: linear-gradient(#e3e3e3, #eee); display: flex; align-items: center; justify-content: space-between; padding: 0 16px 2px 13px; font-size: 12px; }

/* taskbar */
.task { height: 36px; flex: none; display: flex; align-items: center; background: linear-gradient(#2b66d8, #5796f2 3px, #2a61de 8px, #2358d6 30px, #1a43a8); color: #fff; font: 13px "Noto Sans", Tahoma, sans-serif; }
.start { width: 115px; height: 36px; display: flex; align-items: center; padding: 0 0 2px 12px; gap: 6px; background: linear-gradient(#2c7a2c, #6db56d 4px, #3c963c 10px, #3a9a3a 28px, #2a702a); border-radius: 0 8px 8px 0; }
.start svg { width: 23px; height: 22px; }
.start b { font: italic bold 20px/24px "Open Sans", sans-serif; text-shadow: 1px 1px 2px #1a441a; }
.q1 { width: 19px; height: 20px; margin: 0 0 1px 14px; } .q2 { width: 18px; height: 18px; margin: 0 0 1px 10px; } .q3 { width: 18px; height: 19px; margin: 0 0 1px 9px; }
.q4 { width: 11px; height: 6px; margin: 0 9px 14px 14px; }
.tb { width: 190px; height: 29px; margin: 2px 2px 0 0; border-radius: 3px; display: flex; align-items: center; gap: 4px; padding: 0 0 3px 11px; background: linear-gradient(#5a98fa, #3b7ff0 5px, #377cee); }
.tb.dark { background: #1e50b4; box-shadow: inset 1px 1px 1px #143a86; padding-left: 13px; }
.tb svg { width: 19px; height: 20px; }
.ru { margin: 0 0 2px auto; width: 42px; }
.tray { position: relative; width: 111px; height: 36px; display: flex; align-items: center; padding: 0 17px 1px 13px; background: linear-gradient(#0e78d8, #35b0f6 4px, #1592e8 10px, #1190e6 29px, #0d6cb8); border-left: 1px solid #0d3a7c; }
.chev { position: absolute; left: -12px; top: 7px; width: 22px; height: 22px; }
.mon { width: 17px; height: 20px; } .plus { width: 19px; height: 19px; margin: 0 8px 0 4px; }
```
FILE: fit.js
```js
// Fits each caption to its column width, by tracking or by horizontal scale.
document.querySelectorAll('[data-w]').forEach(function (el) {
  var target = +el.dataset.w;
  var natural = el.getBoundingClientRect().width;
  if (el.dataset.mode === 'scale') {
    el.style.transformOrigin = '0 50%';
    el.style.transform = 'scaleX(' + target / natural + ')';
    el.style.marginRight = (target - natural) + 'px';
  } else {
    el.style.letterSpacing = (target - natural) / el.textContent.length + 'px';
  }
});
```
